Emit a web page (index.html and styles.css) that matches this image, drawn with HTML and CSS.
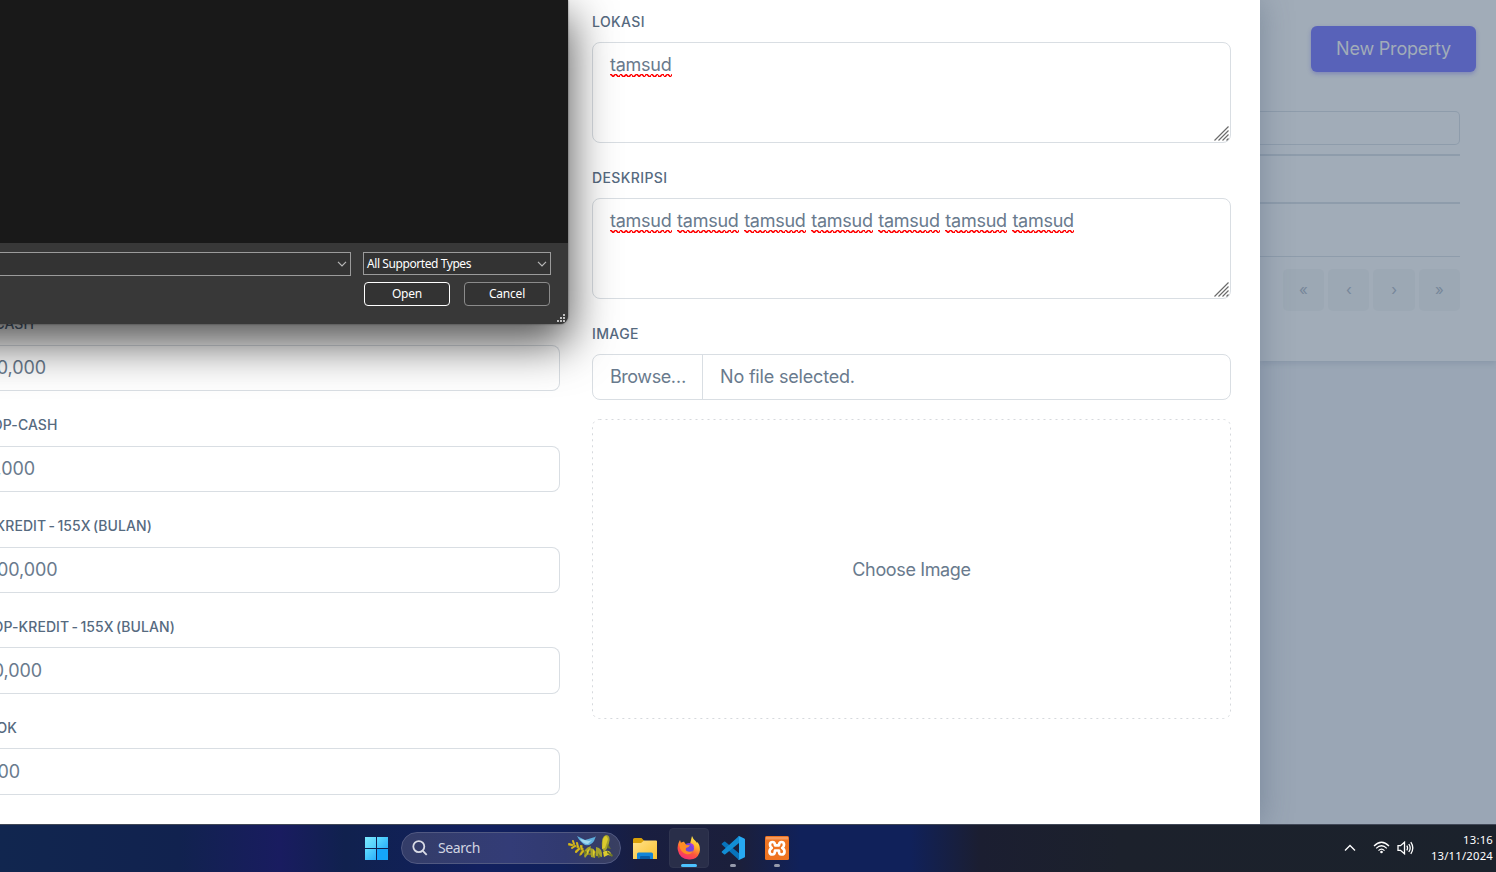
FILE: index.html
```
<!DOCTYPE html>
<html lang="id">
<head>
<meta charset="utf-8">
<title>New Property</title>
<link rel="stylesheet" href="styles.css">
</head>
<body>
<div class="screen">
  <main class="page">
    <section class="modal">
      <div class="col col-left">
        <div class="field"><div class="label cut w34"><span>CASH</span></div><div class="input"><div class="value cut w46"><span>0,000</span></div></div></div>
        <div class="field"><div class="label cut w57"><span>DP-CASH</span></div><div class="input"><div class="value cut w35"><span>0,000</span></div></div></div>
        <div class="field"><div class="label cut w152"><span>KREDIT - 155X (BULAN)</span></div><div class="input"><div class="value cut w58"><span>00,000</span></div></div></div>
        <div class="field"><div class="label cut w175"><span>DP-KREDIT - 155X (BULAN)</span></div><div class="input"><div class="value cut w42"><span>0,000</span></div></div></div>
        <div class="field"><div class="label cut w17"><span>OK</span></div><div class="input"><div class="value cut w20"><span>00</span></div></div></div>
      </div>
      <div class="col col-right">
        <div class="label">LOKASI</div>
        <div class="textarea">
          <span class="typo">tamsud</span>
          <svg class="grip" width="15" height="15" viewBox="0 0 15 15"><path d="M.5 14.5l14-14M4.5 14.5l10-10M8.5 14.5l6-6M12.5 14.5l2-2"/></svg>
        </div>
        <div class="label">DESKRIPSI</div>
        <div class="textarea">
          <span class="typo">tamsud</span> <span class="typo">tamsud</span> <span class="typo">tamsud</span> <span class="typo">tamsud</span> <span class="typo">tamsud</span> <span class="typo">tamsud</span> <span class="typo">tamsud</span>
          <svg class="grip" width="15" height="15" viewBox="0 0 15 15"><path d="M.5 14.5l14-14M4.5 14.5l10-10M8.5 14.5l6-6M12.5 14.5l2-2"/></svg>
        </div>
        <div class="label">IMAGE</div>
        <div class="file"><span class="browse">Browse…</span><span class="filename">No file selected.</span></div>
        <div class="drop"><svg class="dash" width="639" height="300"><rect x=".5" y=".5" width="638" height="299" rx="7"/></svg><span>Choose Image</span></div>
      </div>
    </section>
    <aside class="behind">
      <div class="card">
        <div class="new"><span>New Property</span></div>
        <div class="filter"></div>
        <div class="row head"></div>
        <div class="row body"></div>
        <div class="pager"><span>«</span><span>‹</span><span>›</span><span>»</span></div>
      </div>
    </aside>
  </main>

  <div class="dialog">
    <div class="files"></div>
    <div class="controls">
      <div class="combo name"><svg width="10" height="6" viewBox="0 0 10 6"><path d="M1 .8l4 4 4-4"/></svg></div>
      <div class="side">
        <div class="combo type"><span>All Supported Types</span><svg width="10" height="6" viewBox="0 0 10 6"><path d="M1 .8l4 4 4-4"/></svg></div>
        <div class="buttons"><div class="btn primary"><span>Open</span></div><div class="btn"><span>Cancel</span></div></div>
      </div>
    </div>
    <svg class="size" width="8" height="8" viewBox="0 0 8 8"><path d="M6 0h2v2H6zM3 3h2v2H3zM6 3h2v2H6zM0 6h2v2H0zM3 6h2v2H3zM6 6h2v2H6z"/></svg>
  </div>

  <footer class="taskbar">
    <div class="apps">
      <svg class="win" width="24" height="24" viewBox="0 0 24 24">
        <defs><linearGradient id="wg" x1="0" y1="0" x2="1" y2="1"><stop offset="0" stop-color="#7be9ff"/><stop offset="1" stop-color="#4fcdfd"/></linearGradient><linearGradient id="wh" x1="0" y1="0" x2="1" y2="1"><stop offset="0" stop-color="#5fdcff"/><stop offset="1" stop-color="#2bb0fa"/></linearGradient></defs>
        <path fill="url(#wg)" d="M0 1h11v11H0z"/><path fill="url(#wh)" d="M12 1h11v11H12z"/><path fill="url(#wh)" d="M0 13h11v11H0z"/><path fill="#15a5fa" d="M12 13h11v11H12z"/>
      </svg>
      <div class="search">
        <svg width="16" height="16" viewBox="0 0 16 16"><circle cx="6.8" cy="6.6" r="5.5"/><path d="M10.8 10.8l3.9 4"/></svg>
        <span>Search</span>
        <svg class="art" width="46" height="25" viewBox="0 0 46 25">
          <g fill="none" stroke-linecap="round"><path stroke="#887d23" stroke-width="2" d="M1 10q8 0 14 6t12 1M8 16l6-5M12 20l3-6"/><path stroke="#d4b61f" stroke-width="2" d="M1 9l3 1M5 6l1 3M4 13l3-2M9 8l1 4M8 17l3-3M13 11l1 3M13 19l2-3"/></g>
          <path fill="#5eaedc" d="M9 1l8 4 10-3 1-1-2 5q-3 5-9 4-5-3-8-9"/><path fill="#a2d8ed" d="M12 4l9 2 3-1-4 4q-5 0-8-5"/>
          <path fill="#a6a32c" d="M17 15q2-3 6-4-1 7-6 12-2-3 0-8zM22 13q7 0 5 10l-4-1zM28 12q7 1 6 10l-6-1zM34 13q-1-12 4-13 5 0 3 8-1 6-5 9z"/>
          <path fill="#dccb2e" d="M35 4q3-6 5 0l-3 9-3 1zM35 17q7-4 9 4l-4-1-4 2zM25 14l2 3-2 5zM19 16l3-3-3 7z"/>
          <path fill="#6f7828" d="M16 15l3 2-3 4zM30 18l3 4-3 1zM40 9l3 5-4-1zM39 16l6 4-1 2-5-4z"/>
        </svg>
      </div>
      <div class="app folder">
        <svg width="25" height="24" viewBox="0 0 25 24"><defs><linearGradient id="fg" x1="0" y1="0" x2="1" y2="1"><stop stop-color="#ffe18a"/><stop offset="1" stop-color="#f9c22f"/></linearGradient></defs><path fill="#d9a009" d="M0 3.500Q0 2 1.500 2h7l3 3H24v5H0z"/><path fill="url(#fg)" d="M0 7h8l3-2.500h12q1 0 1 1V23H0z"/><path fill="#1385d8" d="M4 23v-5q0-1.500 1.500-1.500h13q1.500 0 1.500 1.500v5z"/><path fill="#095da8" d="M8 20h8q1 0 1 1v2H7v-2q0-1 1-1"/></svg>
      </div>
      <div class="app active">
        <svg width="24" height="24" viewBox="0 0 24 24"><defs><linearGradient id="fx" x1=".8" y1="0" x2=".3" y2="1"><stop offset="0" stop-color="#fff14f"/><stop offset=".35" stop-color="#ffb52d"/><stop offset=".65" stop-color="#ff583b"/><stop offset="1" stop-color="#f52b78"/></linearGradient></defs>
        <path fill="url(#fx)" d="M15 0q1 3 3.500 5 1 1 1.500 2l.5-1q3.500 5 2 10.500Q20 24 12 23.500 2.500 23 .8 14 0 9 3 4l1 3 3-1.500 1 2.500h5q1-4 2-8"/>
        <circle cx="11.800" cy="12.300" r="5.200" fill="#7545d9"/><path fill="#ff8c25" d="M2 8q3-3 6-1l1 2 4 .3q-1 2-4 2.700-1 3 2 3.500 3 1 5-1-2 5-7 3.500Q3 16 2 8"/><path fill="#a33ae0" d="M12 7q6 0 5 6l-2-3z"/></svg><i></i>
      </div>
      <div class="app run">
        <svg width="24" height="24" viewBox="0 0 24 24"><path fill="#0873bb" d="M1.200 7.200L3 5.800q.7-.4 1.300 0L18 17.300V24L.8 8.500q-.5-.7.4-1.300"/><path fill="#128dd5" d="M1.200 16.700L3 18.200q.7.400 1.300 0L18 7V0L.8 15.400q-.5.700.4 1.300"/><path fill="#27a9f2" d="M18 0l5.300 2.400q.7.400.7 1.200v16.800q0 .8-.7 1.200L18 24q-.7.100-1.200-.4 1.200.4 1.200-1V1.400q0-1.400-1.200-1 .5-.5 1.200-.4"/></svg><i></i>
      </div>
      <div class="app run">
        <svg width="24" height="24" viewBox="0 0 24 24"><rect width="24" height="24" rx="1.500" fill="#ef7421"/><path fill="#f69a5c" d="M1 1h22v2.500H1z"/><path fill="none" stroke="#fff" stroke-width="2.700" stroke-linejoin="round" d="M7.500 6Q10 6 10 9.300h4Q14 6 16.500 6 19 6 19 8.700q0 2.300-1.800 3.300 2.300 1 2.300 3.700 0 2.800-3 2.800t-2.500-4h-4q0 4-2.500 4-3 0-3-2.800 0-2.700 2.300-3.700Q5 11 5 8.700 5 6 7.500 6z"/></svg><i></i>
      </div>
    </div>
    <div class="tray">
      <svg width="12" height="8" viewBox="0 0 12 8"><path d="M1 6.500l5-5 5 5"/></svg>
      <svg class="wifi" width="17" height="13" viewBox="0 0 17 13"><path d="M1 5q7.500-7.500 15 0M3.200 7.400q5.300-5.200 10.600 0M5.500 9.600q3-2.900 6 0"/><circle cx="8.500" cy="11" r="1.300"/></svg>
      <svg class="vol" width="17" height="14" viewBox="0 0 17 14"><path d="M1 4.700h2.500l4-3.500v11.600l-4-3.500H1zM9.800 4.700q1.500 2.300 0 4.600M11.800 3q2.800 4 0 8M13.800 1.200q4 5.800 0 11.600"/></svg>
      <div class="clock"><span class="time">13:16</span><span class="date">13/11/2024</span></div>
    </div>
  </footer>
</div>
</body>
</html>
```
FILE: styles.css
```
* { box-sizing: border-box; }
body { margin: 0; }
.screen { position: relative; width: 1496px; height: 872px; overflow: hidden; display: flex; flex-direction: column; font-family: Inter, sans-serif; }
.page { height: 824px; display: flex; background: #9aa6b5; font-size: 18px; color: #697a8d; }
.modal { width: 1260px; height: 824px; display: flex; gap: 32px; background: #fff; box-shadow: 0 0 30px rgba(62, 82, 108, .38); position: relative; z-index: 1; }
.col-left { width: 560px; padding-top: 312px; }
.col-right { width: 639px; padding-top: 10px; }
.field { height: 100.8px; }
.label { height: 24px; line-height: 24px; font-size: 14px; font-weight: 500; color: #566a7f; letter-spacing: .38px; white-space: nowrap; }
.cut { display: flex; justify-content: flex-end; overflow: hidden; white-space: nowrap; }
.field .label { height: 25px; line-height: 24px; padding-top: .4px; letter-spacing: .08px; word-spacing: -1.500px; }
.w17 { width: 17px; } .w20 { width: 20px; } .w34 { width: 34px; } .w35 { width: 35px; }
.w42 { width: 42px; } .w46 { width: 46px; } .w57 { width: 57.500px; } .w58 { width: 57.500px; }
.w152 { width: 152px; } .w175 { width: 175px; }
.value { letter-spacing: -.1px; }
.input { height: 46.400px; margin-top: 8px; border: 1px solid #d9dee3; border-left: 0; border-radius: 0 8px 8px 0; line-height: 44px; }
.field .value { padding-top: .4px; }
.textarea { position: relative; height: 101px; margin: 8px 0 23px; padding: 10px 17px; border: 1px solid #d9dee3; border-radius: 8px; line-height: 24px; white-space: nowrap; }
.typo { display: inline-block; width: 62px; height: 24px; letter-spacing: -.25px; background: url("data:image/svg+xml,%3Csvg xmlns='http://www.w3.org/2000/svg' width='5.2' height='3'%3E%3Cpath d='M-.5 .5h1.500l1.600 2h1.200L5.200 .5' fill='none' stroke='red' stroke-width='1.4'/%3E%3C/svg%3E") 0 100% repeat-x; }
.grip { position: absolute; right: 1px; bottom: 1px; fill: none; stroke: #6b6b6b; stroke-width: 1.200; }
.file { height: 46px; margin-top: 8px; display: flex; border: 1px solid #d9dee3; border-radius: 8px; line-height: 44px; }
.browse { width: 110px; padding-left: 17px; border-right: 1px solid #d9dee3; letter-spacing: -.45px; }
.filename { padding-left: 17px; letter-spacing: -.18px; }
.drop { position: relative; height: 300px; margin-top: 19px; display: flex; align-items: center; justify-content: center; letter-spacing: -.36px; }
.dash { position: absolute; inset: 0; fill: none; stroke: #d6d9dd; stroke-dasharray: 2 4; }
.behind { width: 236px; }
.card { height: 361px; padding: 26px 36px 0 0; background: #a1acb8; box-shadow: 0 2px 6px rgba(67, 89, 113, .2); }
.new { width: 165px; height: 46px; margin-left: 51px; border-radius: 6px; background: #5862b9; color: #a1acb8; line-height: 46px; text-align: center; letter-spacing: -.2px; box-shadow: 0 2px 4px rgba(75, 82, 180, .4); }
.filter { height: 34px; margin-top: 39px; border: 1px solid #8e9cab; border-left: 0; border-radius: 0 5px 5px 0; }
.row.head { height: 50px; margin-top: 9px; border: solid #8e9cab; border-width: 2px 0; }
.row.body { height: 53px; border-bottom: 1px solid #8e9cab; }
.pager { display: flex; justify-content: flex-end; gap: 4px; margin-top: 12px; }
.pager span { width: 41.300px; height: 42px; border-radius: 5px; background: #9ca8b4; color: #77879a; text-align: center; line-height: 42px; font-size: 15px; }

.dialog { position: absolute; z-index: 3; left: -100px; top: 0; width: 668px; height: 324px; padding-left: 100px; background: #383838; border-radius: 0 0 8px 0; box-shadow: 0 18px 46px 2px rgba(0, 0, 0, .68), 0 0 2px rgba(0, 0, 0, .6); color: #fff; font: 12px "Noto Sans", sans-serif; }
.files { height: 243px; margin-left: -100px; background: #191919; }
.controls { display: flex; gap: 12px; padding-top: 9px; }
.combo { display: flex; align-items: center; justify-content: space-between; border: 1px solid #9b9b9b; background: #333; }
.combo svg { fill: none; stroke: #b8b8b8; stroke-width: 1.2; }
.name { width: 351px; height: 24px; border-left: 0; justify-content: flex-end; padding-right: 3px; }
.type { width: 188px; height: 23px; padding: 0 3px; letter-spacing: -.42px; }
.buttons { display: flex; gap: 14px; padding: 7px 0 0 1px; letter-spacing: -.2px; }
.btn { width: 86px; height: 24px; display: flex; align-items: center; justify-content: center; padding-bottom: 2px; border: 1px solid #8b8b8b; border-radius: 4px; background: #333; }
.primary { border-color: #fff; }
.size { position: absolute; right: 3px; bottom: 2px; fill: #bfbfbf; }

.taskbar { position: relative; z-index: 4; height: 48px; border-top: 1px solid #414857; display: flex; justify-content: space-between; padding: 0 0 2px 365px; background: linear-gradient(90deg, #11264f 0, #11224f 180px, #191c60 280px, #10214e 345px, #12205f 480px, #10205a 560px, #191e40 640px, #1b1f3b 740px, #10215a 800px, #10215a 910px, #1b1e31 980px, #1c212c 1120px, #1b222c 100%); }
.apps { display: flex; align-items: center; }
.win { margin-right: 12px; }
.search { width: 220px; height: 32px; display: flex; align-items: center; padding: 0 6px 0 10px; border: 1px solid #515982; border-radius: 16px; background: linear-gradient(90deg, #343d68, #333c77 50%, #313a70 75%, #393f60); color: #d1d4e1; font: 14px "Noto Sans", sans-serif; letter-spacing: -.4px; }
.search svg { fill: none; stroke: #d9dbe5; stroke-width: 1.8; }
.search span { margin-left: 10px; }
.search .art { margin-left: auto; stroke: none; }
.app { position: relative; width: 40px; height: 40px; margin-left: 4px; display: flex; align-items: center; justify-content: center; border-radius: 4px; }
.active { background: #292e49; border: 1px solid #303550; }
.app i { position: absolute; bottom: 1px; width: 6px; height: 3px; border-radius: 2px; background: #969aab; }
.active i { width: 16px; bottom: 0; background: #4cc2ff; }
.tray { display: flex; align-items: center; color: #fff; font: 11.300px "Noto Sans", sans-serif; padding-right: 3px; }
.tray svg { fill: none; stroke: #fff; stroke-width: 1.3; }
.wifi { margin-left: 17px; }
.wifi circle { fill: #fff; stroke: none; }
.vol { margin-left: 7px; }
.clock { width: 79px; display: flex; flex-direction: column; align-items: flex-end; line-height: 16px; letter-spacing: .2px; }
```
